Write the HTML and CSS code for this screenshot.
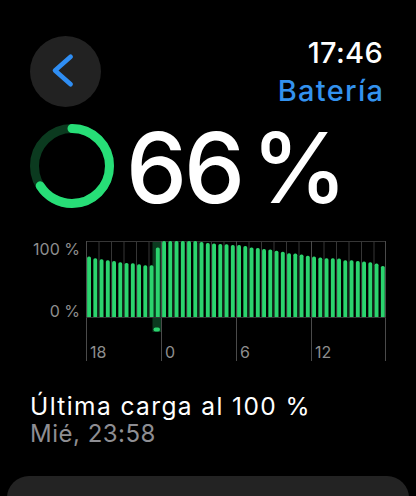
FILE: index.html
```html
<!DOCTYPE html>
<html lang="es">
<head>
<meta charset="utf-8">
<title>Batería</title>
<link rel="stylesheet" href="styles.css">
</head>
<body>
<div class="screen">
  <header class="header">
    <button class="back" aria-label="Atrás">
      <svg width="71" height="71" viewBox="0 0 71 71"><path d="M40.6 20.8 L25 34.5 L40.6 48.2" fill="none" stroke="#2f8ef4" stroke-width="4.6" stroke-linecap="round" stroke-linejoin="round"/></svg>
    </button>
    <div class="titles">
      <div class="time">17:46</div>
      <div class="app">Batería</div>
    </div>
  </header>

  <section class="hero">
    <svg class="ring" width="84" height="84" viewBox="0 0 84 84">
      <circle cx="42" cy="42" r="37.5" fill="none" stroke="#0b3a1f" stroke-width="9"/>
      <circle cx="42" cy="42" r="37.5" fill="none" stroke="#27de77" stroke-width="9" stroke-linecap="round" stroke-dasharray="155.5 300" transform="rotate(-90 42 42)"/>
    </svg>
    <div class="level">66<span class="pct">%</span></div>
  </section>

  <section class="chart">
    <div class="ylabels">
      <span>100 %</span>
      <span>0 %</span>
    </div>
    <div class="plot">
      <svg width="300" height="91" viewBox="0 0 300 91">
        <defs><clipPath id="c"><rect x="0" y="0" width="300" height="76"/></clipPath></defs>
        <rect x="66.5" y="0" width="8.5" height="91" fill="#0b3a1f"/>
        <g stroke="#363636" stroke-width="1">
          <line x1="0" y1="0.5" x2="300" y2="0.5"/>
          <line x1="0.5" y1="0" x2="0.5" y2="91" stroke="#4a4a4a"/>
          <line x1="13" y1="0" x2="13" y2="76"/>
          <line x1="25.5" y1="0" x2="25.5" y2="76"/>
          <line x1="38" y1="0" x2="38" y2="76"/>
          <line x1="50.5" y1="0" x2="50.5" y2="76"/>
          <line x1="63" y1="0" x2="63" y2="76"/>
          <line x1="75.5" y1="0" x2="75.5" y2="91" stroke="#4a4a4a"/>
          <line x1="88" y1="0" x2="88" y2="76"/>
          <line x1="100.5" y1="0" x2="100.5" y2="76"/>
          <line x1="113" y1="0" x2="113" y2="76"/>
          <line x1="125.5" y1="0" x2="125.5" y2="76"/>
          <line x1="138" y1="0" x2="138" y2="76"/>
          <line x1="150.5" y1="0" x2="150.5" y2="91" stroke="#4a4a4a"/>
          <line x1="163" y1="0" x2="163" y2="76"/>
          <line x1="175.5" y1="0" x2="175.5" y2="76"/>
          <line x1="188" y1="0" x2="188" y2="76"/>
          <line x1="200.5" y1="0" x2="200.5" y2="76"/>
          <line x1="213" y1="0" x2="213" y2="76"/>
          <line x1="225.5" y1="0" x2="225.5" y2="91" stroke="#4a4a4a"/>
          <line x1="238" y1="0" x2="238" y2="76"/>
          <line x1="250.5" y1="0" x2="250.5" y2="76"/>
          <line x1="263" y1="0" x2="263" y2="76"/>
          <line x1="275.5" y1="0" x2="275.5" y2="76"/>
          <line x1="288" y1="0" x2="288" y2="76"/>
          <line x1="299.5" y1="0" x2="299.5" y2="91" stroke="#4a4a4a"/>
          <line x1="0" y1="76.5" x2="300" y2="76.5"/>
        </g>
        <g fill="#2bd46e" clip-path="url(#c)">
          <rect x="1.1" y="15.5" width="3.9" height="64" rx="1.7"/>
          <rect x="7.35" y="17.2" width="3.9" height="64" rx="1.7"/>
          <rect x="13.6" y="18.2" width="3.9" height="64" rx="1.7"/>
          <rect x="19.85" y="19.2" width="3.9" height="64" rx="1.7"/>
          <rect x="26.1" y="20.1" width="3.9" height="64" rx="1.7"/>
          <rect x="32.35" y="21.2" width="3.9" height="64" rx="1.7"/>
          <rect x="38.6" y="21.9" width="3.9" height="64" rx="1.7"/>
          <rect x="44.85" y="22.2" width="3.9" height="64" rx="1.7"/>
          <rect x="51.1" y="23.2" width="3.9" height="64" rx="1.7"/>
          <rect x="57.35" y="24.2" width="3.9" height="64" rx="1.7"/>
          <rect x="63.6" y="24.2" width="3.9" height="64" rx="1.7"/>
          <rect x="69.85" y="6.4" width="3.9" height="80" rx="1.7"/>
          <rect x="76.1" y="0" width="3.9" height="80" rx="1.7"/>
          <rect x="82.35" y="0" width="3.9" height="80" rx="1.7"/>
          <rect x="88.6" y="0" width="3.9" height="80" rx="1.7"/>
          <rect x="94.85" y="0" width="3.9" height="80" rx="1.7"/>
          <rect x="101.1" y="0" width="3.9" height="80" rx="1.7"/>
          <rect x="107.35" y="0" width="3.9" height="80" rx="1.7"/>
          <rect x="113.6" y="1.0" width="3.9" height="80" rx="1.7"/>
          <rect x="119.85" y="2.1" width="3.9" height="80" rx="1.7"/>
          <rect x="126.1" y="2.4" width="3.9" height="80" rx="1.7"/>
          <rect x="132.35" y="3.0" width="3.9" height="80" rx="1.7"/>
          <rect x="138.6" y="3.3" width="3.9" height="80" rx="1.7"/>
          <rect x="144.85" y="4.0" width="3.9" height="80" rx="1.7"/>
          <rect x="151.1" y="4.0" width="3.9" height="80" rx="1.7"/>
          <rect x="157.35" y="5.0" width="3.9" height="80" rx="1.7"/>
          <rect x="163.6" y="6.4" width="3.9" height="80" rx="1.7"/>
          <rect x="169.85" y="7.1" width="3.9" height="80" rx="1.7"/>
          <rect x="176.1" y="8.1" width="3.9" height="80" rx="1.7"/>
          <rect x="182.35" y="8.4" width="3.9" height="80" rx="1.7"/>
          <rect x="188.6" y="9.7" width="3.9" height="80" rx="1.7"/>
          <rect x="194.85" y="10.8" width="3.9" height="80" rx="1.7"/>
          <rect x="201.1" y="12.2" width="3.9" height="80" rx="1.7"/>
          <rect x="207.35" y="12.5" width="3.9" height="80" rx="1.7"/>
          <rect x="213.6" y="13.5" width="3.9" height="80" rx="1.7"/>
          <rect x="219.85" y="14.8" width="3.9" height="80" rx="1.7"/>
          <rect x="226.1" y="15.5" width="3.9" height="80" rx="1.7"/>
          <rect x="232.35" y="16.5" width="3.9" height="80" rx="1.7"/>
          <rect x="238.6" y="17.2" width="3.9" height="80" rx="1.7"/>
          <rect x="244.85" y="17.2" width="3.9" height="80" rx="1.7"/>
          <rect x="251.1" y="17.5" width="3.9" height="80" rx="1.7"/>
          <rect x="257.35" y="19.2" width="3.9" height="80" rx="1.7"/>
          <rect x="263.6" y="19.2" width="3.9" height="80" rx="1.7"/>
          <rect x="269.85" y="20.1" width="3.9" height="80" rx="1.7"/>
          <rect x="276.1" y="20.5" width="3.9" height="80" rx="1.7"/>
          <rect x="282.35" y="21.2" width="3.9" height="80" rx="1.7"/>
          <rect x="288.6" y="22.5" width="3.9" height="80" rx="1.7"/>
          <rect x="294.85" y="24.9" width="3.9" height="80" rx="1.7"/>
        </g>
        <rect x="67.5" y="86.5" width="6.5" height="4" rx="2" fill="#2bd46e"/>
      </svg>
      <div class="xlabels">
        <span>18</span>
        <span>0</span>
        <span>6</span>
        <span>12</span>
      </div>
    </div>
  </section>

  <section class="last">
    <div class="last-title">Última carga al 100 %</div>
    <div class="last-sub">Mié, 23:58</div>
  </section>

  <div class="card"></div>
</div>
</body>
</html>
```

FILE: styles.css
```css
html, body {
  margin: 0;
  padding: 0;
  background: #000;
}

.screen {
  width: 416px;
  height: 496px;
  overflow: hidden;
  background: #000;
  color: #fff;
  font-family: Inter, "Noto Sans", "Liberation Sans", sans-serif;
}

.header {
  display: flex;
  justify-content: space-between;
  align-items: flex-start;
  padding: 36px 33px 0 30px;
}

.back {
  width: 71px;
  height: 71px;
  border: 0;
  padding: 0;
  border-radius: 50%;
  background: #222222;
  display: block;
}

.back svg {
  display: block;
}

.titles {
  text-align: right;
  padding-top: 2px;
}

.time {
  font-size: 29px;
  line-height: 29px;
  font-weight: 500;
  color: #fff;
  letter-spacing: 0.3px;
}

.app {
  margin-top: 10px;
  font-size: 29px;
  line-height: 28px;
  font-weight: 500;
  color: #3392ee;
  letter-spacing: 1.3px;
  margin-right: -1.3px;
}

.hero {
  display: flex;
  align-items: flex-start;
  gap: 12px;
  margin-top: 12px;
  padding-left: 30px;
}

.ring {
  display: block;
  margin-top: 4.5px;
}

.level {
  font-size: 97px;
  line-height: 97px;
  font-weight: 500;
  letter-spacing: -3px;
}

.pct {
  margin-left: 9px;
}

.chart {
  display: flex;
  align-items: flex-start;
  gap: 6px;
  margin-top: 24.5px;
  padding-left: 30px;
}

.ylabels {
  width: 50px;
  height: 78px;
  display: flex;
  flex-direction: column;
  justify-content: space-between;
  align-items: flex-end;
  font-size: 16px;
  line-height: 16px;
  color: #8e8e8e;
}

.plot svg {
  display: block;
}

.xlabels {
  display: grid;
  grid-template-columns: repeat(4, 75px);
  height: 29px;
}

.xlabels span {
  border-left: 1px solid #4a4a4a;
  display: flex;
  align-items: flex-end;
  padding-left: 3px;
  font-size: 16px;
  line-height: 17px;
  color: #8e8e8e;
}

.xlabels span:last-child {
  border-right: 1px solid #4a4a4a;
  box-sizing: border-box;
}

.last {
  margin-top: 31px;
  padding-left: 30px;
}

.last-title {
  font-size: 24.5px;
  line-height: 28px;
  color: #fff;
  letter-spacing: 1.4px;
}

.last-sub {
  font-size: 24px;
  line-height: 28px;
  color: #8e8e93;
  letter-spacing: 0.5px;
}

.card {
  margin: 28.7px 7px 0;
  height: 80px;
  background: #232323;
  border-radius: 22px;
}
```
